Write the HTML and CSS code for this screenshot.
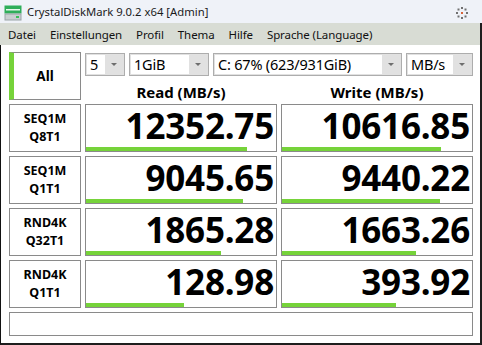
FILE: index.html
```html
<!DOCTYPE html>
<html>
<head>
<meta charset="utf-8">
<link rel="stylesheet" href="styles.css">
</head>
<body>
<div class="window">
  <div class="titlebar">
    <svg class="appicon" width="18" height="17" viewBox="0 0 18 17">
      <rect x="0.5" y="1.5" width="17" height="8" fill="#2fae5a"/>
      <rect x="2" y="5" width="14" height="1.5" fill="#e8f6ec"/>
      <rect x="0.5" y="9.5" width="17" height="7" fill="#9aa3a6"/>
      <rect x="1.5" y="10.5" width="15" height="5" fill="#c9cfd1"/>
      <rect x="12" y="12" width="3" height="2" fill="#3bbf5a"/>
    </svg>
    <span class="title">CrystalDiskMark 9.0.2 x64 [Admin]</span>
    <svg class="themeicon" width="14" height="14" viewBox="0 0 14 14">
      <g fill="#707070">
        <rect x="6" y="1" width="2" height="2"/>
        <rect x="6" y="11" width="2" height="2"/>
        <rect x="1" y="6" width="2" height="2"/>
        <rect x="11" y="6" width="2" height="2"/>
        <rect x="2.5" y="2.5" width="2" height="2"/>
        <rect x="9.5" y="2.5" width="2" height="2"/>
        <rect x="2.5" y="9.5" width="2" height="2"/>
        <rect x="9.5" y="9.5" width="2" height="2"/>
      </g>
      <rect x="6" y="6" width="2" height="2" fill="#d8643a"/>
    </svg>
  </div>
  <div class="menubar">
    <span class="menu">Datei</span>
    <span class="menu">Einstellungen</span>
    <span class="menu">Profil</span>
    <span class="menu">Thema</span>
    <span class="menu">Hilfe</span>
    <span class="menu">Sprache (Language)</span>
  </div>
  <div class="client">
    <div class="grid">
      <div class="allbtn"><span>All</span></div>
      <div class="topright">
        <div class="toolbar">
          <div class="combo w40"><div class="field">5</div><div class="arrow"></div></div>
          <div class="combo w80"><div class="field">1GiB</div><div class="arrow"></div></div>
          <div class="combo w189"><div class="field">C: 67% (623/931GiB)</div><div class="arrow"></div></div>
          <div class="combo w67"><div class="field">MB/s</div><div class="arrow"></div></div>
        </div>
        <div class="headers">
          <div class="hdr">Read (MB/s)</div>
          <div class="hdr">Write (MB/s)</div>
        </div>
      </div>

      <div class="label">SEQ1M<br>Q8T1</div>
      <div class="val"><div class="num">12352.75</div><div class="bar" style="width:161px"></div></div>
      <div class="val"><div class="num">10616.85</div><div class="bar" style="width:159px"></div></div>

      <div class="label">SEQ1M<br>Q1T1</div>
      <div class="val"><div class="num">9045.65</div><div class="bar" style="width:157px"></div></div>
      <div class="val"><div class="num">9440.22</div><div class="bar" style="width:158px"></div></div>

      <div class="label">RND4K<br>Q32T1</div>
      <div class="val"><div class="num">1865.28</div><div class="bar" style="width:135px"></div></div>
      <div class="val"><div class="num">1663.26</div><div class="bar" style="width:134px"></div></div>

      <div class="label">RND4K<br>Q1T1</div>
      <div class="val"><div class="num">128.98</div><div class="bar" style="width:98px"></div></div>
      <div class="val"><div class="num">393.92</div><div class="bar" style="width:114px"></div></div>

      <div class="status"></div>
    </div>
  </div>
</div>
</body>
</html>
```
FILE: styles.css
```css
html, body {
  margin: 0;
  padding: 0;
  background: #ffffff;
}
body {
  width: 482px;
  height: 345px;
  overflow: hidden;
  font-family: "Noto Sans", "Open Sans", sans-serif;
}
.window {
  width: 482px;
  height: 345px;
  display: flex;
  flex-direction: column;
}
.titlebar {
  height: 23px;
  background: #eff2f8;
  display: flex;
  align-items: center;
  padding-left: 4px;
  box-sizing: border-box;
}
.appicon {
  display: block;
  margin-top: 1px;
}
.title {
  margin-left: 5px;
  font-size: 11.3px;
  color: #1b1b1b;
  letter-spacing: 0;
}
.themeicon {
  margin-left: auto;
  margin-right: 13px;
  margin-top: 2px;
}
.menubar {
  height: 22px;
  background: #d8dcd4;
  border-right: 2px solid #1e1e1e;
  display: flex;
  align-items: center;
  padding-left: 1px;
  box-sizing: border-box;
}
.menu {
  font-size: 11.5px;
  color: #111;
  padding: 0 7px;
  letter-spacing: -0.1px;
}
.client {
  flex: 1;
  border-left: 1px solid #111;
  border-right: 2px solid #1e1e1e;
  border-bottom: 2px solid #1e1e1e;
  padding: 7px 0 0 8px;
  box-sizing: border-box;
  background: #fff;
}
.grid {
  display: grid;
  grid-template-columns: 72px 192px 192px;
  grid-template-rows: 48px 48px 48px 48px 48px 24px;
  gap: 4px;
}
.allbtn {
  border: 1px solid #8a8a8a;
  border-left: 5px solid #76d33a;
  display: flex;
  align-items: center;
  justify-content: center;
  font-weight: 700;
  font-size: 13.5px;
  color: #000;
}
.allbtn span {
  margin-left: -4px;
}
.topright {
  grid-column: 2 / 4;
  display: flex;
  flex-direction: column;
}
.toolbar {
  display: flex;
  gap: 4px;
  margin-top: 1px;
  height: 23px;
}
.combo {
  box-sizing: border-box;
  height: 23px;
  border: 1px solid #adadad;
  background: #e1e1e1;
  display: flex;
  padding: 1px;
}
.w40 { width: 40px; }
.w80 { width: 80px; }
.w189 { width: 189px; }
.w67 { width: 67px; }
.field {
  flex: 1;
  background: #fff;
  font-size: 14.5px;
  line-height: 19px;
  padding-left: 3px;
  color: #000;
  white-space: nowrap;
  overflow: hidden;
  letter-spacing: -0.2px;
}
.arrow {
  width: 18px;
  display: flex;
  align-items: center;
  justify-content: center;
}
.arrow::after {
  content: "";
  width: 0;
  height: 0;
  border-left: 3px solid transparent;
  border-right: 3px solid transparent;
  border-top: 3px solid #6e6e6e;
}
.headers {
  display: grid;
  grid-template-columns: 192px 192px;
  gap: 4px;
  flex: 1;
}
.hdr {
  text-align: center;
  font-weight: 700;
  font-size: 15px;
  line-height: 18px;
  padding-top: 7px;
  color: #000;
}
.label {
  border: 1px solid #8a8a8a;
  display: flex;
  align-items: center;
  justify-content: center;
  text-align: center;
  font-weight: 700;
  font-size: 12.5px;
  line-height: 18px;
  color: #000;
}
.val {
  border: 1px solid #8a8a8a;
  display: flex;
  flex-direction: column;
}
.num {
  flex: 1;
  text-align: right;
  font-weight: 700;
  font-size: 35px;
  line-height: 42px;
  padding-right: 2px;
  color: #000;
  letter-spacing: -0.2px;
}
.bar {
  height: 4px;
  background: #76d33a;
}
.status {
  grid-column: 1 / 4;
  border: 1px solid #8a8a8a;
}
```
